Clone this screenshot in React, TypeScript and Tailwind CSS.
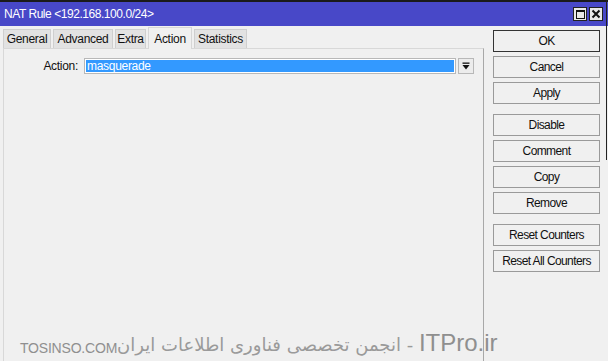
import React from "react";

const font = { fontFamily: '"Liberation Sans", Arial, sans-serif' };

function Btn({ label, strong }: { label: string; strong?: boolean }) {
  return (
    <div
      className={`h-[22px] w-[107px] flex items-center justify-center text-[12px] tracking-[-0.6px] text-[#111] bg-[#f0f0f0] border ${
        strong ? "border-[#333]" : "border-[#9a9a9a]"
      }`}
    >
      {label}
    </div>
  );
}

function Tab({ label, active, w }: { label: string; active?: boolean; w: string }) {
  return (
    <div
      className={`${w} flex items-center justify-center text-[12px] tracking-[-0.3px] text-[#111] border border-b-0 ${
        active
          ? "h-[22px] bg-[#f0f0f0] border-[#d6d6d6] relative top-[1px] z-10"
          : "h-[19px] bg-[#e2e2e2] border-[#cfcfcf]"
      }`}
    >
      {label}
    </div>
  );
}

export default function App() {
  return (
    <div className="w-[608px] h-[361px] bg-[#f0f0f0] relative overflow-hidden flex flex-col" style={font}>
      <div className="h-[2px] bg-[#1a1a1a] shrink-0" />
      <div className="h-[24px] bg-[#4848c8] flex items-center pl-[4px] pr-[5px] shrink-0">
        <span className="text-white text-[12px] tracking-[-0.45px] flex-1">NAT Rule &lt;192.168.100.0/24&gt;</span>
        <div className="w-[14px] h-[14px] bg-[#e8e8e8] border border-[#222] flex items-center justify-center mr-[2px]">
          <div className="w-[9px] h-[9px] border border-[#111] border-t-2" />
        </div>
        <div className="w-[14px] h-[14px] bg-[#e8e8e8] border border-[#222] flex items-center justify-center">
          <svg width="10" height="10" viewBox="0 0 10 10">
            <path d="M1.5 1.5 L8.5 8.5 M8.5 1.5 L1.5 8.5" stroke="#111" strokeWidth="2" />
          </svg>
        </div>
      </div>
      <div className="flex flex-1">
        <div className="w-[484px] flex flex-col pl-[3px] pt-[2px]">
          <div className="flex items-end gap-[2px] h-[20px]">
            <Tab label="General" w="w-[48px]" />
            <Tab label="Advanced" w="w-[60px]" />
            <Tab label="Extra" w="w-[31px]" />
            <Tab label="Action" w="w-[44px]" active />
            <Tab label="Statistics" w="w-[53px]" />
          </div>
          <div className="flex-1 border-l border-t border-[#d8d8d8] border-r-[#a8a8a8] border-r bg-[#f0f0f0] pt-[9px]">
            <div className="flex items-center h-[16px]">
              <span className="w-[80px] text-right text-[12px] tracking-[-0.3px] text-[#111] pr-[6px]">Action:</span>
              <div className="w-[372px] h-[16px] border border-[#b8b8b8] bg-white p-[1px]">
                <div className="h-full bg-[#3399ff] text-white text-[12px] tracking-[-0.3px] leading-[12px] pl-[1px]">masquerade</div>
              </div>
              <div className="ml-[2px] w-[16px] h-[16px] border border-[#b8b8b8] bg-[#ececec] flex items-center justify-center">
                <svg width="8" height="8" viewBox="0 0 8 8">
                  <rect x="0.5" y="0.5" width="7" height="1.3" fill="#111" />
                  <path d="M0.5 3 H7.5 L4 7.5 Z" fill="#111" />
                </svg>
              </div>
            </div>
          </div>
        </div>
        <div className="flex flex-col pl-[9px] pt-[4px]">
          <div className="flex flex-col gap-[4px]">
            <Btn label="OK" strong />
            <Btn label="Cancel" />
            <Btn label="Apply" />
          </div>
          <div className="flex flex-col gap-[4px] mt-[10px]">
            <Btn label="Disable" />
            <Btn label="Comment" />
            <Btn label="Copy" />
            <Btn label="Remove" />
          </div>
          <div className="flex flex-col gap-[4px] mt-[10px]">
            <Btn label="Reset Counters" />
            <Btn label="Reset All Counters" />
          </div>
        </div>
      </div>
      <div className="absolute right-[1px] top-0 w-[1px] h-[160px] bg-[#222]" />
      <div className="absolute left-[20px] top-[330px] flex items-end text-[#8f8f8f] whitespace-nowrap">
        <span className="text-[14px] leading-[20px] tracking-[-0.2px]">TOSINSO.COM</span>
        <span
          dir="rtl"
          className="text-[18px] leading-[26px] text-[#9a9a9a]"
          style={{ fontFamily: '"DejaVu Sans", "Liberation Sans", sans-serif' }}
        >
          <span className="text-[24px] text-[#8f8f8f]" style={font}>ITPro.ir</span> - انجمن تخصصی فناوری اطلاعات ایران
        </span>
      </div>
    </div>
  );
}
